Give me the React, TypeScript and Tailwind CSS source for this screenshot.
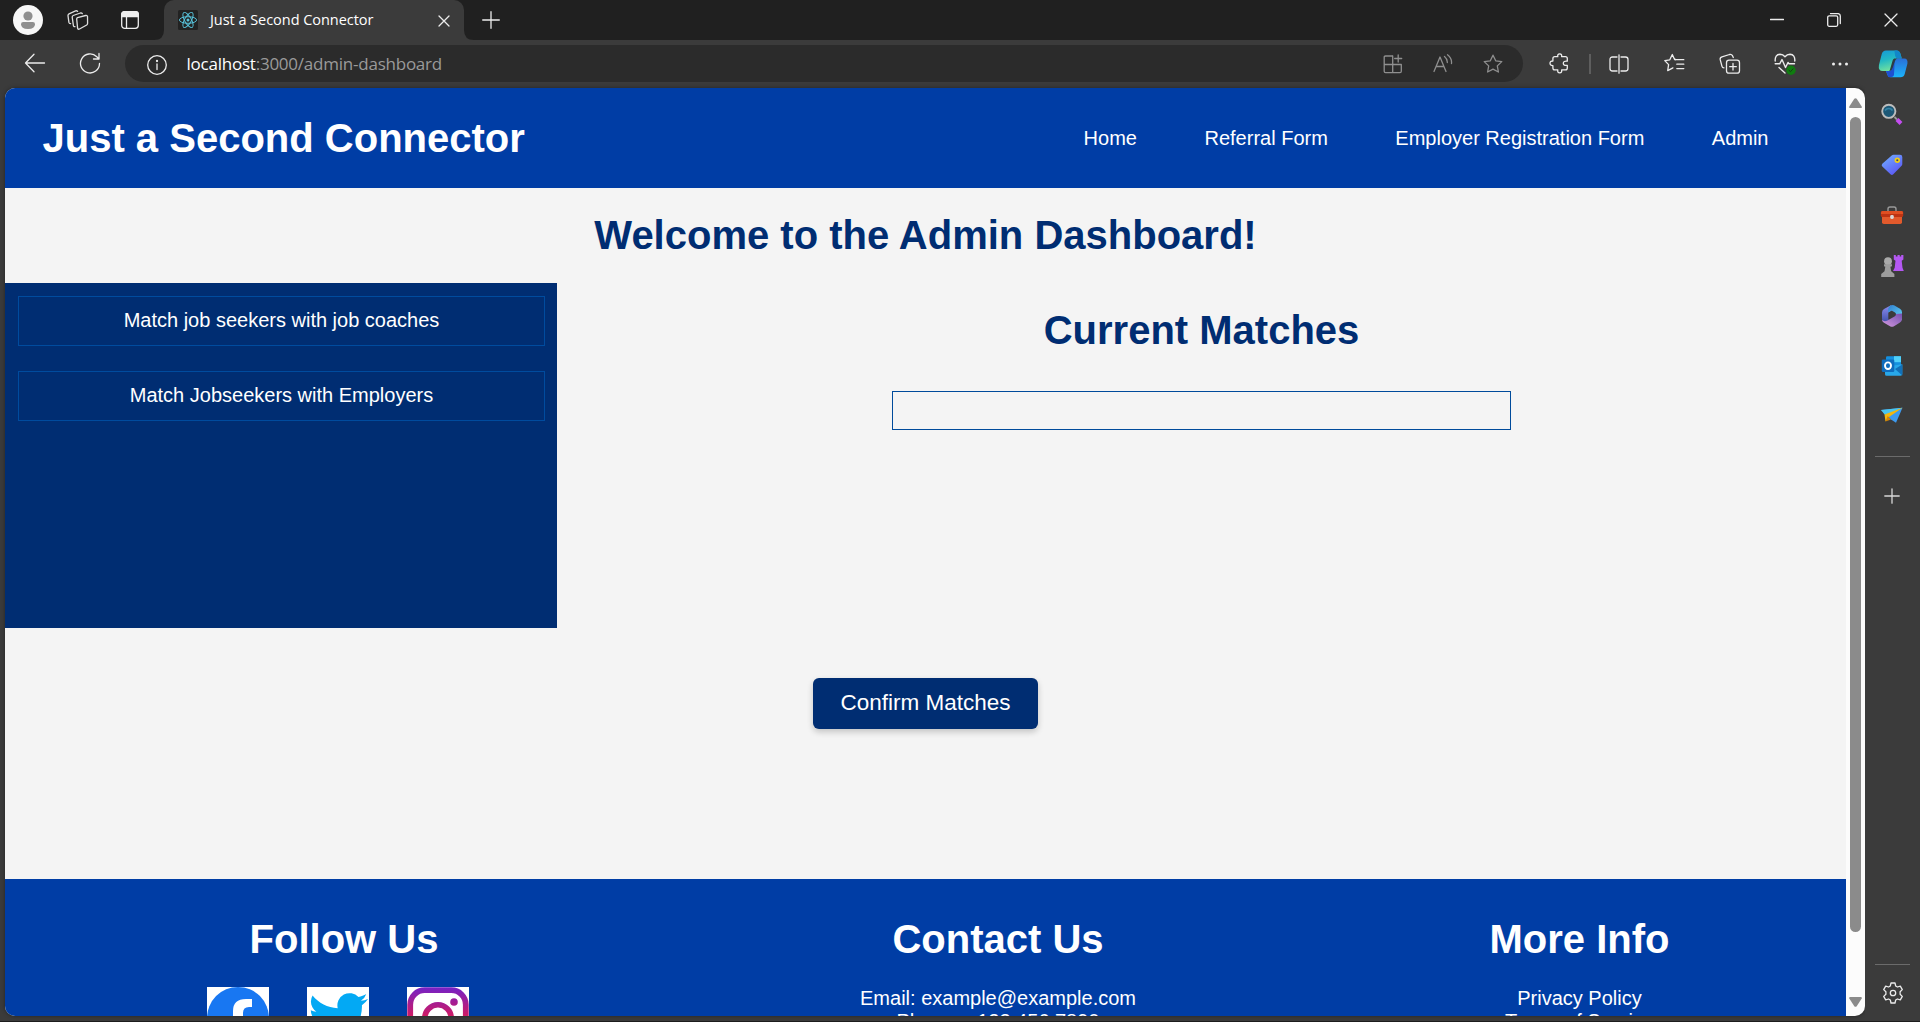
import React from 'react';

type IconProps = { children: React.ReactNode; size?: number; className?: string; color?: string };

/* Thin-line icon on a 20-unit grid */
function Line({ children, size = 20, className = '', color = 'text-[#ececec]' }: IconProps) {
  return (
    <svg width={size} height={size} viewBox={`0 0 ${size} ${size}`} fill="none" stroke="currentColor" strokeWidth="1.3" strokeLinecap="round" strokeLinejoin="round" className={`shrink-0 ${color} ${className}`}>
      {children}
    </svg>
  );
}

function ReactFavicon() {
  return (
    <svg width="20" height="20" viewBox="0 0 20 20" fill="none" stroke="#58c4dc" strokeWidth="0.95" className="shrink-0">
      <rect width="20" height="20" rx="1.5" fill="#222" stroke="none" />
      <ellipse cx="10" cy="10" rx="8.6" ry="3.3" />
      <ellipse cx="10" cy="10" rx="8.6" ry="3.3" transform="rotate(60 10 10)" />
      <ellipse cx="10" cy="10" rx="8.6" ry="3.3" transform="rotate(120 10 10)" />
      <circle cx="10" cy="10" r="1.5" fill="#58c4dc" stroke="none" />
    </svg>
  );
}

function TabStrip() {
  return (
    <div className="flex h-10 bg-[#202020]">
      <div className="flex w-[164px] items-center">
        <svg width="30" height="30" viewBox="0 0 30 30" className="ml-[13px]">
          <circle cx="15" cy="15" r="15" fill="#f7f7f7" />
          <circle cx="15" cy="11" r="4.6" fill="#8f8f8f" />
          <path d="M8 19.2q0-2.2 2.2-2.2h9.6q2.2 0 2.2 2.2q0 4.8-7 4.8t-7-4.8z" fill="#8f8f8f" />
        </svg>
        <Line size={22} className="ml-6" color="text-[#dedede]">
          <path d="M10.5 8.6l8.2-2.1q1.5-.3 1.8 1l.1 6.8q0 1-.9 1.7l-7.2 4q-1.6.8-1.9-.9l-.9-9q0-1.1.8-1.5z" />
          <path d="M8 17.6q-1.4.4-1.6-1L5.2 8.200q-.1-1.300 1-1.700l7.200-2.500q1.300-.3 1.900.6" />
          <path d="M3.600 14.600q-1.400.1-1.700-1.200L1 6.600q0-1.300 1-1.800l6.600-2.900q1.300-.4 2 .5" />
        </Line>
        <svg width="18" height="18" viewBox="0 0 18 18" fill="none" stroke="#eee" strokeWidth="1.3" className="ml-8">
          <rect x=".7" y=".7" width="16.6" height="16.600" rx="3" />
          <path d="M.7 5.500V3.500q0-2.800 2.800-2.800h11q2.800 0 2.800 2.800v2z" fill="#eee" />
          <path d="M5.500 5.500v11.500" />
        </svg>
      </div>
      <div className="relative flex w-[300px] items-center rounded-t-[10px] bg-[#3b3b3b] pl-[14px]">
        <svg width="10" height="10" className="absolute bottom-0 -left-[10px]"><path d="M10 0V10H0Q10 10 10 0z" fill="#3b3b3b" /></svg>
        <svg width="10" height="10" className="absolute bottom-0 -right-[10px]"><path d="M0 0V10H10Q0 10 0 0z" fill="#3b3b3b" /></svg>
        <ReactFavicon />
        <span className="ml-3 w-[222px] whitespace-nowrap pb-px font-['Open_Sans',sans-serif] text-[14.500px] tracking-[-0.040px] text-white">Just a Second Connector</span>
        <Line size={12} className="mt-px ml-1.5"><path d="M1 1l10 10M11 1L1 11" /></Line>
      </div>
      <Line size={18} className="mt-[11px] ml-[17.5px]"><path d="M9 .7v16.600M.7 9h16.600" /></Line>
      <div className="mr-px ml-auto flex">
        <div className="flex w-[57px] justify-center pt-[13px]"><Line size={14}><path d="M.5 6.500h13" /></Line></div>
        <div className="flex w-[57px] justify-center pt-[13px]">
          <Line size={14}><rect x=".7" y="2.800" width="10" height="10.500" rx="1.500" /><path d="M3.500.6h7.300q2.500 0 2.500 2.500v7.400" /></Line>
        </div>
        <div className="flex w-[57px] justify-center pt-[13px]"><Line size={14}><path d="M1 1l12 12M13 1L1 13" /></Line></div>
      </div>
    </div>
  );
}

function Slot({ children, wide = false }: { children: React.ReactNode; wide?: boolean }) {
  return <div className={`flex shrink-0 items-center justify-center ${wide ? 'w-[55px]' : 'w-[50px]'}`}>{children}</div>;
}

function Copilot() {
  return (
    <svg width="30" height="28" viewBox="0 0 32 28" preserveAspectRatio="none">
      <defs>
        <linearGradient id="cpA" x1="0" y1="0" x2="0.300" y2="1"><stop offset="0" stopColor="#1598d8" /><stop offset=".5" stopColor="#22b8c4" /><stop offset="1" stopColor="#6fe0a0" /></linearGradient>
        <linearGradient id="cpB" x1="0.500" y1="0" x2="0.500" y2="1"><stop offset="0" stopColor="#2a6fd8" /><stop offset="1" stopColor="#1bb4fb" /></linearGradient>
      </defs>
      <path d="M8.500.5H20q3 0 4 3.500l1.300 4.500h-4.500q-2.500 0-3.400 2.500l-2.600 7.500Q14 21 11.500 21H5q-5 0-4-6L4 4Q5 .5 8.500.5z" fill="url(#cpA)" />
      <path d="M17.500.5H20q3 0 4 3.500l1.300 4.500h-4q-2.300 0-3-2.500z" fill="#1287c9" />
      <path d="M23.500 8.500H28q4 0 3.400 5l-2.900 10.500q-1 3.300-4.500 3.300H13.500q-2.700 0-3.500-2.500L8.500 21h3.300q2.400 0 3.200-2.300l2.900-8q.8-2.200 3.100-2.200z" fill="url(#cpB)" />
      <path d="M8.500 21h3.300q2.400 0 3.200-2.300l2.900-8L17 25q-.6 2.300-5.300 2.200Q10.500 27 10 24.500z" fill="#1e50d0" />
      <path d="M17.300 8.500h3.200q-1.800.6-2.400 2.500L15.600 18q-.9 3-3.300 3L15.600 10.500q.5-1.700 1.700-2z" fill="#2c3c44" />
    </svg>
  );
}

function Toolbar() {
  return (
    <div className="flex h-12 bg-[#3b3b3b]">
      <div className="flex h-[46px] w-[125px] items-center">
        <Line size={22} className="ml-6"><path d="M20.500 11H1.500M10 2.200L1.500 11l8.500 8.800" /></Line>
        <Line size={22} className="ml-[33px]"><path d="M20.500 11.500A9.500 9.500 0 1 1 17.800 4.800L20 7M20 1.500V7h-5.500" /></Line>
      </div>
      <div className="mt-[5px] flex h-[37px] w-[1398px] items-center rounded-full bg-[#2b2b2b] pr-[5px] pl-[22px]">
        <Line size={20} className="mt-0.5"><circle cx="10" cy="10" r="9.300" /><path d="M10 9v5.500" /><circle cx="10" cy="6" r=".5" fill="currentColor" /></Line>
        <span className="ml-[19.5px] font-['Open_Sans',sans-serif] text-[17px] leading-6 tracking-[-0.230px] whitespace-nowrap text-[#9a9a9a]"><span className="text-white">localhost</span>:3000/admin-dashboard</span>
        <div className="ml-auto flex">
          <Slot>
            <Line color="text-[#8f8f8f]"><path d="M9.500 2H2.500Q1.200 2 1.200 3.300v14q0 1.300 1.300 1.300H17q1.300 0 1.300-1.300V10.500H1.200M9.700 2v16.500M15.200 1v7M11.700 4.500h7" /></Line>
          </Slot>
          <Slot>
            <Line color="text-[#8f8f8f]"><path d="M1 17.500L7 3l6 14.500M3.200 12.500h7.600M11.500 2.500q3 2.500 2.800 6M14.500.8q4.600 3.500 4 8.700" /></Line>
          </Slot>
          <Slot>
            <Line color="text-[#8f8f8f]"><path d="M10 1.200l2.700 5.600 6.100.8-4.500 4.300 1.100 6.100L10 15.100 4.600 18l1.100-6.100L1.200 7.600l6.100-.8z" /></Line>
          </Slot>
        </div>
      </div>
      <div className="ml-[11px] flex h-[47px]">
        <Slot>
          <Line size={21}><path d="M5.800 3.700h3q-.6-2.900 1.900-2.900t1.900 2.900h3.800q1.900 0 1.900 1.900v2.600q-4-.4-4 2.100t4 2.100V15q0 1.900-1.900 1.900h-3.800q.6 2.900-1.900 2.900T8.800 16.900h-3q-1.900 0-1.900-1.900v-2.400Q1 12.700 1 10.300T3.900 8V5.600q0-1.900 1.900-1.900z" /></Line>
        </Slot>
        <div className="mt-[14px] ml-[5px] h-5 w-0.5 bg-[#5e5e5e]" />
        <Slot wide><Line><path d="M8 3H3.500Q1 3 1 5.500v9Q1 17 3.500 17H8M12 3h4.500Q19 3 19 5.500v9q0 2.500-2.500 2.500H12M10 .8v18.400" /></Line></Slot>
        <Slot wide><Line size={21} className="ml-0.5"><path d="M11.500 6.700h-.8L8.300 1.500 5.800 6.800.8 7.600l3.800 4-.9 6 5.200-2.700M11.500 6.700h8.300M12.800 11.200h7M12.800 15.600h7M11.500 6.700L10.800 6" /></Line></Slot>
        <Slot wide><Line size={22} className="ml-0.5"><rect x="7.500" y="7.200" width="13" height="13" rx="2.500" /><path d="M14 10.500v6.500M10.700 13.700h6.600M5 14.800q-1.600 0-2-1.500L1.200 6.700Q.8 4.500 3 3.800L10.500 1.500q2-.5 3 1.200l.8 1.800" /></Line></Slot>
        <Slot wide>
          <svg width="22" height="22" viewBox="0 0 22 22" fill="none" stroke="#ececec" strokeWidth="1.400" strokeLinecap="round" strokeLinejoin="round" className="ml-0.5 shrink-0">
            <path d="M1.200 8Q.8 1.500 6 1.300q3 0 5 2.500 2-2.500 5-2.500 5.200.2 4.800 6.700M1.200 10.800h4.500L8 6.500l3.500 8 2.500-5 1 1.300h5.500M5 14.500l6 5.500" />
            <circle cx="17" cy="17.200" r="4.700" fill="#107c10" stroke="none" />
            <path d="M15 17.300l1.500 1.400 2.500-2.800" stroke="#163d16" strokeWidth="1" />
          </svg>
        </Slot>
        <Slot wide>
          <svg width="18" height="6" viewBox="0 0 18 6" fill="#eee" className="ml-0.5"><circle cx="2.500" cy="3" r="1.500" /><circle cx="9" cy="3" r="1.500" /><circle cx="15.500" cy="3" r="1.500" /></svg>
        </Slot>
        <div className="ml-0.5 flex"><Slot><Copilot /></Slot></div>
      </div>
    </div>
  );
}

function SideIcon({ children }: { children: React.ReactNode }) {
  return (
    <div className="flex h-[50.2px] items-center justify-center pr-0.5">
      <svg width="24" height="24" viewBox="0 0 24 24">{children}</svg>
    </div>
  );
}

function EdgeSidebar() {
  return (
    <aside className="flex w-[55px] flex-col bg-[#3b3b3b] pt-0.5">
      <SideIcon>
        <path d="M14.500 14l2.500 2.500" stroke="#999" strokeWidth="1.800" />
        <path d="M17 16.500l4 4" stroke="#c44df0" strokeWidth="4" />
        <circle cx="8.800" cy="8.300" r="6.600" fill="#1d5876" stroke="#bdbdbd" strokeWidth="1.900" />
        <path d="M5 7.500a4.500 4.500 0 0 1 7.500 0" fill="none" stroke="#3585a8" strokeWidth="1.500" />
      </SideIcon>
      <SideIcon>
        <defs><linearGradient id="tg" x1="0" y1="0" x2="0.700" y2="1"><stop offset="0" stopColor="#72b4ff" /><stop offset="1" stopColor="#5b56f5" /></linearGradient></defs>
        <path d="M13.500 1.800h6.500q2.300 0 2.300 2.300V11q0 1-.7 1.700l-8.300 8.600q-1.400 1.300-2.800 0L2.300 13.500q-1.300-1.400 0-2.800l9.400-8.200q.8-.7 1.800-.7z" fill="url(#tg)" />
        <circle cx="17.300" cy="7.200" r="1.900" fill="#3c4a6c" stroke="#f0cd18" strokeWidth="1.700" />
      </SideIcon>
      <SideIcon>
        <path d="M8 8.500V6q0-2 2-2h4q2 0 2 2v2.500" fill="none" stroke="#999" strokeWidth="1.400" />
        <rect x="2" y="12" width="20" height="9" rx="1.800" fill="#e25a2c" />
        <rect x=".8" y="8" width="22.400" height="6" rx="1.500" fill="#bd3312" />
        <path d="M1 9.500q0-1.500 1.500-1.500h19q1.500 0 1.500 1.500v1.500H1z" fill="#e04f22" />
        <rect x="10.200" y="12" width="3.600" height="4" rx="1.400" fill="#d8d8d8" />
      </SideIcon>
      <SideIcon>
        <path d="M13.800 1h2v1.600h1.700V1h2.200v1.600h1.500V1h2.200v4.500l-1.700 1.300.8 7 1.300 3.300H13l1.700-3.300.8-7-1.700-1.300z" fill="#b458f2" />
        <circle cx="8" cy="7.200" r="3.900" fill="#aaa" />
        <path d="M4 10.300h8v1.900l-1.600.6.8 4.500 3.200 2.600v3H1.200v-3l3.300-2.600.8-4.500-1.300-.6z" fill="#9c9c9c" />
      </SideIcon>
      <SideIcon>
        <defs>
          <linearGradient id="m1" x1="0" y1="0" x2="0" y2="1"><stop offset="0" stopColor="#8d8df0" /><stop offset="1" stopColor="#3d4fa8" /></linearGradient>
          <linearGradient id="m2" x1="0" y1="0" x2="1" y2="1"><stop offset="0" stopColor="#2f7fd0" /><stop offset="1" stopColor="#65d6f5" /></linearGradient>
          <linearGradient id="m3" x1="0" y1="1" x2="1" y2="0"><stop offset="0" stopColor="#d79be0" /><stop offset="1" stopColor="#7350b0" /></linearGradient>
        </defs>
        <path d="M11 1.300L4 5Q2 6.200 2 8.700v6.300q0 2.500 2 3.500 1.500.8 3-.2l2.500-1.500q-1.200-1-1.200-2.500V8.500L14 5z" fill="url(#m1)" />
        <path d="M10.500 1.500q1.800-1 3.500-.2L20 4.700q2 1.200 2 3.500V16l-6-3.800V10.500q0-1.300-1-2L11.500 6.500 8.300 8.500q-1-5 2.200-7z" fill="url(#m2)" />
        <path d="M22 9.500v5.800q0 2-2 3.200l-6 3.700q-2 1-4 0l-6-3.500q-1.800-1-2-3 2 2.300 5 1l7.500-4.200q1.500-1 1.500-2.500z" fill="url(#m3)" />
      </SideIcon>
      <SideIcon>
        <rect x="6" y="2.200" width="15" height="12" rx="1.200" fill="#1490df" />
        <path d="M14 2.200h7v6h-7z" fill="#50d0f8" />
        <path d="M10 12l12.300-1.700V20q0 1.700-1.700 1.700H6.500q-1.500 0-1.500-1.500V16z" fill="#28a8ea" />
        <path d="M15 15l7.300-4.500v11z" fill="#1270b8" />
        <rect x="1.800" y="5.500" width="12.500" height="12.500" rx="1.300" fill="#0f6cbd" />
        <ellipse cx="8" cy="11.700" rx="3" ry="3.300" fill="none" stroke="#fff" strokeWidth="1.900" />
      </SideIcon>
      <SideIcon>
        <path d="M1 6L22.500 3.700 16 18.700l-5-3.200z" fill="#3d9af0" />
        <path d="M1 6l21.500-2.300L5 11z" fill="#49c5ee" />
        <path d="M22.500 3.700L4.500 10.500 5.500 17.500l3.500-4.500z" fill="#f5b70c" />
        <path d="M5.500 17.500L7.700 12l3.300 3.500z" fill="#d38406" />
      </SideIcon>
      <div className="mx-auto mt-[14.6px] h-px w-[35px] bg-[#6b6b6b]" />
      <div className="mt-[31px] flex justify-center pr-0.5">
        <Line size={16} color="text-[#d8d8d8]"><path d="M8 .8v14.400M.8 8h14.400" /></Line>
      </div>
      <div className="mx-auto mt-auto h-px w-[35px] bg-[#6b6b6b]" />
      <div className="mt-[17px] mb-[17px] flex justify-center">
        <Line size={22}>
          <path d="M9 1h4l.7 3 1.700 1 2.900-.9 2 3.500-2.200 2.100v2.600l2.200 2.100-2 3.500-2.900-.9-1.700 1-.7 3H9l-.7-3-1.700-1-2.900.9-2-3.500 2.200-2.100V9.700L1.700 7.600l2-3.500 2.900.9 1.700-1z" />
          <circle cx="11" cy="11" r="2.700" />
        </Line>
      </div>
    </aside>
  );
}

function Scrollbar() {
  return (
    <div className="flex w-[19px] shrink-0 flex-col items-center bg-[#fcfcfc] pt-2.5 pb-[9px]">
      <svg width="13" height="10" viewBox="0 0 13 10"><path d="M5.300.8q1.200-1.300 2.400 0l5 7.700q.5 1.500-1 1.500H1.300q-1.500 0-1-1.500z" fill="#8b8b8b" /></svg>
      <div className="mt-[9px] h-[815px] w-[11px] rounded-full bg-[#8b8b8b]" />
      <svg width="13" height="10" viewBox="0 0 13 10" className="mt-auto"><path d="M5.300 9.200q1.200 1.300 2.400 0l5-7.700Q13.200 0 11.700 0H1.300q-1.500 0-1 1.500z" fill="#8b8b8b" /></svg>
    </div>
  );
}

function Site() {
  return (
    <div className="flex h-[928px] flex-1 flex-col overflow-hidden bg-[#f4f4f4]">
      <header className="flex h-[100px] shrink-0 justify-between bg-[#003da5] pr-[77.5px] pl-[37.5px] text-white">
        <h1 className="mt-[27px] text-[40px] leading-[46px] font-bold">Just a Second Connector</h1>
        <nav className="mt-[38px] flex gap-[67.5px] text-[20px] leading-6">
          <a>Home</a><a>Referral Form</a><a>Employer Registration Form</a><a>Admin</a>
        </nav>
      </header>
      <h1 className="mt-6 shrink-0 text-center text-[40px] leading-[46px] font-bold text-[#002d72]">Welcome to the Admin Dashboard!</h1>
      <div className="mt-[25px] flex h-[345px] shrink-0">
        <div className="flex w-[552px] flex-col gap-[25px] bg-[#002d72] pt-[13px] pr-3 pl-[13px] text-center text-[20px] leading-6 text-white">
          <div className="h-[50px] border border-[#004b9e] pt-[11px]">Match job seekers with job coaches</div>
          <div className="h-[50px] border border-[#004b9e] pt-[11px]">Match Jobseekers with Employers</div>
        </div>
        <div className="flex flex-1 flex-col items-center pt-6">
          <h2 className="text-[40px] leading-[46px] font-bold text-[#002d72]">Current Matches</h2>
          <div className="mt-[38px] h-[39px] w-[619px] border border-[#004b9b]" />
        </div>
      </div>
      <button className="mx-auto mt-[50px] flex h-[51px] w-[225px] shrink-0 justify-center rounded-[6px] bg-[#002d72] text-[22.500px] leading-[50px] text-white shadow-[0_3px_6px_rgba(0,0,0,0.2)]">Confirm Matches</button>
      <footer className="mt-[150px] flex h-[200px] shrink-0 bg-[#003da5] pt-[37px] text-center text-[20px] leading-[23px] text-white">
        <section className="flex w-[678px] flex-col items-center">
          <h2 className="text-[40px] leading-[46px] font-bold">Follow Us</h2>
          <div className="mt-[25px] mr-[13px] flex gap-[38px]">
            <svg width="62" height="62" viewBox="0 0 62 62"><path fill="#fff" d="M0 0h62v62H0z" /><circle cx="31" cy="31" r="31" fill="#1877f2" /><path d="M45 12h-6q-13 0-13 12v5h-7v9h7v24h10V38h8l1.500-9H36v-3q0-6 6-6h3z" fill="#fff" /></svg>
            <svg width="62" height="62" viewBox="0 0 62 62"><path fill="#fff" d="M0 0h62v62H0z" /><path transform="translate(1.500 .6) scale(2.480)" fill="#03a9f4" d="M23.953 4.570a10 10 0 01-2.825.775 4.958 4.958 0 002.163-2.723c-.951.555-2.005.959-3.127 1.184a4.920 4.920 0 00-8.384 4.482C7.690 8.095 4.067 6.130 1.640 3.162a4.822 4.822 0 00-.666 2.475c0 1.710.870 3.213 2.188 4.096a4.904 4.904 0 01-2.228-.616v.06a4.923 4.923 0 003.946 4.827 4.996 4.996 0 01-2.212.085 4.936 4.936 0 004.604 3.417 9.867 9.867 0 01-6.102 2.105c-.39 0-.779-.023-1.170-.067a13.995 13.995 0 007.557 2.209c9.053 0 13.998-7.496 13.998-13.985 0-.21 0-.42-.015-.63A9.935 9.935 0 0024 4.590z" /></svg>
            <svg width="62" height="62" viewBox="0 0 62 62" fill="none">
              <defs><linearGradient id="ig" gradientUnits="userSpaceOnUse" x1="0" y1="0" x2="0" y2="62"><stop offset="0" stopColor="#7322c8" /><stop offset=".45" stopColor="#cc1a68" /><stop offset="1" stopColor="#fdb52c" /></linearGradient></defs>
              <path fill="#fff" d="M0 0h62v62H0z" />
              <rect x="3.200" y="3.200" width="55.600" height="55.600" rx="14.500" stroke="url(#ig)" strokeWidth="5.800" />
              <circle cx="31" cy="31" r="13.200" stroke="url(#ig)" strokeWidth="5.600" />
              <circle cx="47" cy="15" r="3.800" fill="url(#ig)" />
            </svg>
          </div>
        </section>
        <section className="w-[630px]">
          <h2 className="text-[40px] leading-[46px] font-bold">Contact Us</h2>
          <p className="mt-[25px]">Email: example@example.com</p>
          <p>Phone: +123 456 7890</p>
        </section>
        <section className="w-[533px]">
          <h2 className="text-[40px] leading-[46px] font-bold">More Info</h2>
          <p className="mt-[25px]">Privacy Policy</p>
          <p>Terms of Service</p>
        </section>
      </footer>
    </div>
  );
}

export default function App() {
  return (
    <div className="flex h-[1022px] w-[1920px] flex-col overflow-hidden bg-[#3b3b3b] font-['Liberation_Sans',Arial,sans-serif]">
      <TabStrip />
      <Toolbar />
      <div className="flex h-[933px] pl-[5px]">
        <main className="flex h-[928px] w-[1860px] overflow-hidden rounded-[10px] shadow-[0_0_4px_rgba(0,0,0,0.4)]">
          <Site />
          <Scrollbar />
        </main>
        <EdgeSidebar />
      </div>
      <div className="h-px bg-[#1c1c1c]" />
    </div>
  );
}
